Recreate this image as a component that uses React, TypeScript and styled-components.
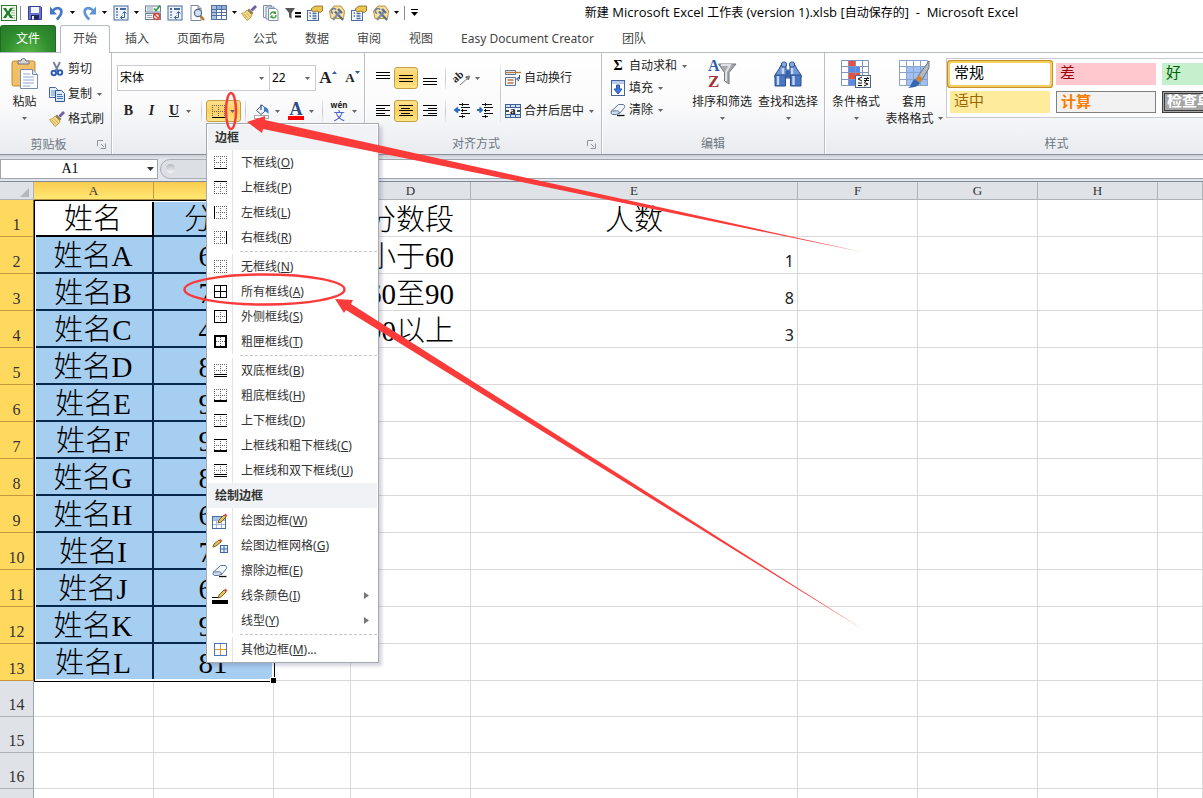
import React from "react";
import styled, { createGlobalStyle, css } from "styled-components";

const UI = `"Noto Sans", "Noto Sans CJK SC", sans-serif`;
const SONG = `"Liberation Serif", "Noto Sans CJK SC", serif`;

const GlobalStyle = createGlobalStyle`
  * { box-sizing: border-box; }
  html, body, #root { height: 100%; }
  body { margin: 0; background: #fff; color: #1e1e1e; font: 12px/16px ${UI}; overflow: hidden; }
  button, input, select { font: inherit; color: inherit; margin: 0; padding: 0; border: 0; background: none; border-radius: 0; }
  button { white-space: nowrap; cursor: pointer; }
  svg { display: block; flex: none; overflow: visible; }
`;

const Window = styled.div`
  position: relative;
  display: flex;
  flex-direction: column;
  height: 100%;
  overflow: hidden;
`;

/* ---------- title bar ---------- */

const TitleBar = styled.header`
  display: flex;
  align-items: center;
  height: 25px;
  flex: none;
`;
const QuickAccess = styled.nav`
  display: flex;
  align-items: center;
  height: 24px;
  padding-left: 1px;
  flex: none;
`;
const QuickButton = styled.button<{ $w?: number }>`
  display: flex;
  align-items: center;
  gap: 5px;
  width: ${(p) => p.$w ?? 22}px;
  height: 20px;
`;
const QuickDivider = styled.span`
  width: 1px;
  height: 14px;
  margin: 0 6px 0 3px;
  background: #8c8c8c;
`;
const Title = styled.h1`
  flex: 1;
  margin: 0;
  padding-right: 18px;
  text-align: center;
  font-size: 12px;
  font-weight: 400;
  white-space: pre;
  color: #000;
`;
const TitleLatin = styled.span`
  font-family: "Open Sans", sans-serif;
  font-size: 13px;
`;

/* ---------- tabs ---------- */

const TabStrip = styled.nav`
  display: flex;
  align-items: flex-end;
  height: 28px;
  flex: none;
  border-bottom: 1px solid #b6bac1;
`;
const FileTab = styled.button`
  width: 56px;
  height: 27px;
  margin-right: 3px;
  border: 1px solid #1d6b1f;
  border-bottom: 0;
  border-radius: 3px 3px 0 0;
  background: radial-gradient(ellipse at 50% 110%, #5cb84a 0%, #2f8d2d 60%, #26792a 100%);
  color: #fff;
`;
const Tab = styled.button<{ $active?: boolean }>`
  height: 27px;
  padding: 0 14px;
  color: #444;
  ${(p) =>
    p.$active &&
    css`
      height: 28px;
      margin: 0 1px -1px;
      padding: 0 12px 1px;
      border: 1px solid #b6bac1;
      border-bottom: 0;
      border-radius: 3px 3px 0 0;
      background: #fff;
    `}
`;

/* ---------- ribbon ---------- */

const Ribbon = styled.section`
  display: flex;
  height: 102px;
  flex: none;
  background: linear-gradient(#fff 0, #fbfbfc 50%, #e8ebef 100%);
  border-bottom: 1px solid #8b9097;
`;
const Group = styled.div<{ $w: number }>`
  display: flex;
  flex-direction: column;
  flex: none;
  width: ${(p) => p.$w}px;
  border-right: 1px solid #bcc0c6;
  box-shadow: 1px 0 0 #fff;
`;
const GroupBody = styled.div<{ $pad?: string }>`
  display: flex;
  flex: 1;
  padding: ${(p) => p.$pad ?? "0"};
`;
const GroupLabel = styled.div`
  display: flex;
  align-items: center;
  justify-content: center;
  height: 20px;
  color: #6d7682;
  span { flex: 1; text-align: center; }
  svg { width: 9px; margin-right: 5px; }
`;
const Stack = styled.div<{ $gap?: number }>`
  display: flex;
  flex: none;
  flex-direction: column;
  gap: ${(p) => p.$gap ?? 0}px;
`;
const Row = styled.div`
  display: flex;
  align-items: center;
  height: 26px;
`;
const Divider = styled.span<{ $tall?: boolean }>`
  flex: none;
  width: 1px;
  height: ${(p) => (p.$tall ? 58 : 22)}px;
  margin: 0 4px;
  background: linear-gradient(#e8eaed, #c4c7cc, #e8eaed);
`;
const BigButton = styled.button<{ $w: number }>`
  display: flex;
  flex: none;
  flex-direction: column;
  align-items: center;
  width: ${(p) => p.$w}px;
  height: 76px;
  padding-top: 4px;
`;
const BigIcon = styled.span`
  display: flex;
  align-items: center;
  justify-content: center;
  height: 34px;
  margin-bottom: 2px;
`;
const BigLine = styled.span`
  display: flex;
  align-items: center;
  justify-content: center;
  gap: 4px;
  height: 17px;
`;
const SmallButton = styled.button<{ $h?: number }>`
  display: flex;
  align-items: center;
  gap: 3px;
  height: ${(p) => p.$h ?? 22}px;
  > span + svg { margin-left: 2px; }
`;
const ToolButton = styled.button<{ $w?: number; $gap?: number; $on?: boolean }>`
  display: flex;
  flex: none;
  align-items: center;
  justify-content: center;
  gap: ${(p) => p.$gap ?? 5}px;
  width: ${(p) => p.$w ?? 23}px;
  height: 22px;
  ${(p) =>
    p.$on &&
    css`
      border: 1px solid #c2a04a;
      border-radius: 3px;
      background: linear-gradient(#fde08c, #fdd063 50%, #ffe585);
    `}
`;
const Glyph = styled.span<{ $size?: number; $style?: string }>`
  font: ${(p) => p.$style ?? "bold"} ${(p) => p.$size ?? 14}px/18px "Liberation Serif", serif;
  color: #222;
`;
const Underlined = styled(Glyph)`
  text-decoration: underline;
`;
const ColorGlyph = styled(Glyph)`
  width: 16px;
  height: 18px;
  line-height: 15px;
  border-bottom: 4px solid #f00;
  color: #2b4a86;
`;
const Pinyin = styled.span`
  display: flex;
  flex-direction: column;
  align-items: center;
  width: 16px;
  font: bold 8px/9px ${UI};
  color: #222;
  span { font-size: 11px; line-height: 13px; font-weight: 400; color: #2747c0; }
`;
const Sigma = styled.span`
  width: 16px;
  text-align: center;
  font: bold 14px/16px "Liberation Serif", serif;
  color: #000;
`;
const Combo = styled.label<{ $w: number }>`
  display: flex;
  flex: none;
  align-items: center;
  width: ${(p) => p.$w}px;
  height: 26px;
  margin-right: -1px;
  padding-right: 5px;
  border: 1px solid #c9ccd1;
  background: #fff;
  select {
    flex: 1;
    min-width: 0;
    height: 22px;
    padding-left: 2px;
    appearance: none;
    outline: 0;
    color: #000;
  }
`;
const MenuAnchor = styled.div`
  position: relative;
  display: flex;
`;

/* ---------- cell styles gallery ---------- */

const Gallery = styled.div`
  display: grid;
  grid-template-columns: repeat(4, 100px);
  grid-auto-rows: 22px;
  gap: 6px 6px;
  height: 60px;
  margin: 5px 0 0 3px;
  padding: 4px 3px;
  border: 1px solid #c6cad0;
  background: #fff;
`;
const StyleCell = styled.button<{ $bg: string; $fg: string; $kind?: "on" | "box" | "dark" }>`
  padding: 0 0 4px 4px;
  text-align: left;
  font-size: 15px;
  line-height: 18px;
  overflow: hidden;
  background: ${(p) => p.$bg};
  color: ${(p) => p.$fg};
  ${(p) =>
    p.$kind === "on" &&
    css`
      outline: 2px solid #f5cf5e;
      box-shadow: 0 0 0 3px #c98f2e;
      border-radius: 1px;
    `}
  ${(p) =>
    p.$kind === "box" &&
    css`
      border: 1px solid #7f7f7f;
      font-weight: 700;
    `}
  ${(p) =>
    p.$kind === "dark" &&
    css`
      border: 3px double #3f3f3f;
      padding-left: 2px;
      line-height: 12px;
      font-weight: 700;
    `}
`;

/* ---------- borders menu ---------- */

const Menu = styled.div`
  position: absolute;
  z-index: 5;
  top: 23px;
  left: 0;
  width: 173px;
  padding: 1px 1px 0;
  border: 1px solid #a7abb0;
  background: #fff;
  box-shadow: 3px 3px 3px rgba(90, 90, 130, 0.25);
`;
const MenuHeading = styled.div`
  height: 25px;
  padding-left: 7px;
  background: #f0f2f5;
  font-weight: 700;
  line-height: 25px;
  color: #333;
`;
const MenuItem = styled.button`
  display: flex;
  align-items: center;
  width: 100%;
  height: 25px;
  padding-right: 8px;
  text-align: left;
  color: #333;
`;
const MenuIcon = styled.span`
  display: flex;
  align-items: center;
  justify-content: center;
  width: 25px;
  height: 25px;
  margin-right: 8px;
  border-right: 1px solid #e2e4e7;
`;
const MenuText = styled.span`
  flex: 1;
`;
const MenuRule = styled.div`
  height: 4px;
  padding: 1px 0 0 32px;
  &::before { content: ""; display: block; border-top: 1px dashed #c6c6c6; }
`;

/* ---------- formula bar ---------- */

const FormulaBar = styled.div`
  display: flex;
  flex: none;
  height: 27px;
  padding-top: 4px;
  background: linear-gradient(#c9ccd2 0, #e3e6ea 4px, #e3e6ea 24px, #dfe4ee 24px);
  border-bottom: 1px solid #868b93;
`;
const NameBox = styled.label`
  display: flex;
  align-items: center;
  width: 158px;
  height: 20px;
  padding-right: 3px;
  border: 1px solid #a0a5ad;
  background: #fff;
  input {
    flex: 1;
    min-width: 0;
    padding-right: 8px;
    text-align: center;
    font: 14px/16px "Liberation Serif", serif;
    outline: 0;
    color: #000;
  }
`;
const FunctionArea = styled.div`
  width: 84px;
  height: 20px;
  margin-left: 2px;
  padding: 4px 5px;
  border: 1px solid #a9aeb6;
  border-radius: 10px 0 0 10px;
  background: #dcdfe4;
  &::before {
    content: "";
    display: block;
    width: 9px;
    height: 9px;
    border-radius: 50%;
    background: linear-gradient(#b4b8be, #f6f7f8);
  }
`;
const FormulaInput = styled.input`
  && {
    flex: 1;
    height: 20px;
    border: solid #a0a5ad;
    border-width: 1px 0;
    background: #fff;
    outline: 0;
  }
`;

/* ---------- sheet ---------- */

const Sheet = styled.main`
  position: relative;
  flex: 1;
  min-height: 0;
  overflow: hidden;
`;
const Grid = styled.table`
  width: 100%;
  table-layout: fixed;
  border-collapse: separate;
  border-spacing: 0;
`;
const ColHead = styled.th<{ $sel?: boolean }>`
  height: 18px;
  padding: 0;
  border-right: 1px solid ${(p) => (p.$sel ? "#c8963c" : "#aeb3b8")};
  border-bottom: 1px solid ${(p) => (p.$sel ? "#b08a3c" : "#aeb3b8")};
  background: ${(p) => (p.$sel ? "linear-gradient(#fbcb50, #ffe873)" : "#dfe2e6")};
  font: 13px/17px ${SONG};
  color: #333;
`;
const Corner = styled(ColHead)`
  svg { margin: 3px 4px 0 auto; }
`;
const RowHead = styled.th<{ $sel?: boolean }>`
  padding: 0;
  border-right: 1px solid ${(p) => (p.$sel ? "#7c6a35" : "#9fa5ab")};
  border-bottom: 1px solid ${(p) => (p.$sel ? "#c8963c" : "#aeb3b8")};
  background: ${(p) => (p.$sel ? "#ffd95e" : "#dfe2e6")};
  vertical-align: bottom;
  text-align: center;
  font: 16px/22px ${SONG};
  color: #333;
`;
const BodyRow = styled.tr<{ $short?: boolean }>`
  height: ${(p) => (p.$short ? 36 : 37)}px;
`;
const Cell = styled.td<{ $sel?: boolean; $head?: boolean; $num?: boolean }>`
  padding: 3px 0 0;
  border-right: 1px solid #d9d9d9;
  border-bottom: 1px solid #d9d9d9;
  overflow: hidden;
  white-space: nowrap;
  text-align: center;
  font: 300 29px/32px ${SONG};
  color: #000;
  ${(p) =>
    p.$sel &&
    css`
      border-right: 2px solid #06284a;
      border-bottom: 2px solid #06284a;
      background: #a6cef0;
    `}
  ${(p) =>
    p.$head &&
    css`
      border-color: #000;
      background: #fff;
    `}
  ${(p) =>
    p.$num &&
    css`
      padding: 12px 3px 0 0;
      text-align: right;
      font: 16px/24px ${UI};
      color: #222;
    `}
`;
const SelectionFrame = styled.div`
  position: absolute;
  top: 18px;
  left: 34px;
  width: 241px;
  height: 482px;
  border: 1px solid #000;
  box-shadow: inset 0 -2px #fff, inset -2px 0 #fff, inset 1px 1px #fff;
  pointer-events: none;
  &::after {
    content: "";
    position: absolute;
    right: -2px;
    bottom: -2px;
    width: 5px;
    height: 5px;
    border: 1px solid #fff;
    border-width: 1px 0 0 1px;
    background: #000;
  }
`;
const Annotations = styled.svg`
  position: absolute;
  z-index: 9;
  top: 0;
  left: 0;
  pointer-events: none;
`;

/* ---------- icons ---------- */

const Down = ({ c = "#666", w = 5 }: { c?: string; w?: number }) => (
  <svg width={w} height={w === 5 ? 3 : 4} viewBox={`0 0 ${w} ${w === 5 ? 3 : 4}`}>
    <path d={w === 5 ? "M0 0h5L2.500 3z" : "M0 0h7L3.500 4z"} fill={c} />
  </svg>
);

const I16 = ({ children }: { children: React.ReactNode }) => (
  <svg width="16" height="16" viewBox="0 0 16 16" fill="none">
    {children}
  </svg>
);

const ExcelIcon = () => (
  <I16>
    <rect x=".5" y=".5" width="15" height="15" fill="#f2f8ef" stroke="#2f7a35" />
    <path d="M10 3h4M10 5.500h4M10 8h4M10 10.500h4M10 13h4" stroke="#8cc084" />
    <path d="M2 3h3l2 3.400L9 3h3L8.600 8 12 13H9L7 9.800 5 13H2l3.400-5z" fill="#217a2b" />
  </I16>
);
const SaveIcon = () => (
  <I16>
    <path d="M1.500 1.500h12l1 1v12h-13z" fill="#6a74cf" stroke="#3a3f95" />
    <rect x="4" y="2" width="8" height="6" fill="#f4f6ff" />
    <rect x="4" y="10" width="8" height="4.500" fill="#24285e" />
    <rect x="5" y="11" width="2" height="3.500" fill="#e8ebff" />
  </I16>
);
const UndoIcon = () => (
  <I16>
    <path d="M4 5.500C7.500 1.500 13 3 12.300 7.500c-.3 2.500-2 4.500-4.500 7" stroke="#4678c8" strokeWidth="2.600" />
    <path d="M1 1.500v8h7z" fill="#4678c8" />
  </I16>
);
const RedoIcon = () => (
  <I16>
    <path d="M12 5.500C8.500 1.500 3 3 3.700 7.500c.3 2.500 2 4.500 4.500 7" stroke="#5f93d8" strokeWidth="2.600" />
    <path d="M15 1.500v8H8z" fill="#5f93d8" />
  </I16>
);
const PivotIcon = () => (
  <I16>
    <rect x="1" y="1" width="14" height="14" fill="#eef3fa" stroke="#466a9c" />
    <path d="M3 4h2M7 4h6" stroke="#466a9c" strokeWidth="2" />
    <path d="M4 6v7" stroke="#7e9cc4" strokeWidth="2" strokeDasharray="2 1" />
    <path d="M7.500 12.500h4V7M9.500 8.500l2-2 2 2M9.500 10.500l-2 2 2 2" stroke="#3c5f92" />
  </I16>
);
const ListIcon = () => (
  <I16>
    <rect x=".5" y="1" width="15" height="6" fill="#f3f6fa" stroke="#6c7f99" />
    <rect x=".5" y="8.500" width="15" height="6" fill="#f3f6fa" stroke="#6c7f99" />
    <path d="M2 3h6M2 5h6M2 10.500h5M2 12.500h5" stroke="#9aa9bd" />
    <path d="M9 3.500l2 2 4-5" stroke="#2c9a3a" strokeWidth="1.600" />
    <circle cx="11.500" cy="11.500" r="3" fill="#fff" stroke="#d33b30" strokeWidth="1.300" />
    <path d="M9.500 9.500l4 4" stroke="#d33b30" strokeWidth="1.300" />
  </I16>
);
const PreviewIcon = () => (
  <I16>
    <path d="M2 .5h7l3 3v12H2z" fill="#fff" stroke="#7788a0" />
    <path d="M9 .5v3h3" stroke="#7788a0" />
    <circle cx="9" cy="8" r="3.600" fill="#cfe2f6" stroke="#566a85" strokeWidth="1.200" />
    <path d="M11.500 11l3.500 4" stroke="#b3742c" strokeWidth="2.400" />
  </I16>
);
const TableIcon = () => (
  <I16>
    <rect x=".5" y=".5" width="15" height="14" fill="#fff" stroke="#50709b" />
    <rect x="1" y="1" width="14" height="3" fill="#8fb0dc" />
    <rect x="1" y="1" width="4" height="13" fill="#a9c3e6" />
    <path d="M1 4.500h14M1 7.500h14M1 10.500h14M5.500 1v13M10.500 1v13" stroke="#50709b" />
  </I16>
);
const BrushIcon = () => (
  <I16>
    <path d="M10.500 5.500L15 1" stroke="#6c5fa6" strokeWidth="2.800" />
    <path d="M8 3.500l4.500 4.500-2 2L6 5.500z" fill="#8a8064" />
    <path d="M6 5l5 5c-1 2.500-2.500 4-5 5.500L.5 8.500C3 8 4.500 7 6 5z" fill="#f3da85" stroke="#b08f3a" strokeWidth=".8" />
    <path d="M3 9l4 4.500M5 7.500l4 4.500" stroke="#c4a149" strokeWidth=".8" />
  </I16>
);
const CopyRefreshIcon = () => (
  <I16>
    <path d="M.5.500h8v12h-8z" fill="#eef3fa" stroke="#7c90ac" />
    <path d="M3 2h8v12H3z" fill="#eef3fa" stroke="#7c90ac" />
    <path d="M5.500 3.500h7l2.500 2v10H5.500z" fill="#fff" stroke="#7c90ac" />
    <path d="M7.500 9.500a2.500 2.500 0 014.500-1.500M13 10a2.500 2.500 0 01-4.500 1.800" stroke="#3c9c2c" strokeWidth="1.400" />
    <path d="M13 6v3h-3zM7.500 13.500v-3h3z" fill="#3c9c2c" />
  </I16>
);
const FilterEqIcon = () => (
  <I16>
    <path d="M0 3h10L6.500 8v6L4 12V8z" fill="#555" />
    <path d="M10 8h6M10 11.500h6" stroke="#000" strokeWidth="2" />
  </I16>
);
const PropsIcon = () => (
  <I16>
    <rect x=".5" y="5.500" width="11" height="10" fill="#f5f8fc" stroke="#4a6da3" />
    <path d="M2.500 8h1.500M2.500 11h1.500M5.500 8.500h4M5.500 11h4M5.500 13.500h4" stroke="#4a6da3" strokeWidth="1.400" />
    <path d="M4 4l4-3h7.500v5l-2.500 1.500L10 6l-4 1z" fill="#ecc552" stroke="#94732a" strokeWidth=".9" />
  </I16>
);
const ToolsIcon = () => (
  <I16>
    <path d="M.5 6L5 1h7l3.500 5-1 7.500H2z" fill="#f8e0a0" stroke="#c0903a" />
    <path d="M6 6.500l8 8.500" stroke="#59708f" strokeWidth="2.200" />
    <path d="M11.500 6L4 15" stroke="#7c8fac" strokeWidth="2.200" />
    <path d="M7 4.500A2.600 2.600 0 104 8.500" stroke="#6d83a3" strokeWidth="1.600" />
    <path d="M9 4l4 4" stroke="#59708f" strokeWidth="2.400" />
  </I16>
);
const PasteIcon = () => (
  <svg width="28" height="32" viewBox="0 0 28 32" fill="none">
    <rect x="1" y="3" width="23" height="25" rx="2" fill="#f0bf67" stroke="#c08b35" />
    <path d="M7 6V3h3a2.500 2.500 0 015 0h3v3z" fill="#d5d8dd" stroke="#70757d" />
    <path d="M9.500 11.500h12l5 5v14h-17z" fill="#fff" stroke="#7a8ba6" />
    <path d="M21.500 11.500v5h5" fill="#dfe7f3" stroke="#7a8ba6" />
    <path d="M12 16h7M12 19h11M12 22h11M12 25h11M12 28h7" stroke="#8fa8cc" />
  </svg>
);
const CutIcon = () => (
  <I16>
    <path d="M4.500 1l4.500 9M11 1L6.500 10" stroke="#6c7f9c" strokeWidth="1.800" />
    <circle cx="4.800" cy="12" r="2.200" stroke="#2f5fb4" strokeWidth="2" />
    <circle cx="11" cy="11.500" r="2.200" stroke="#2f5fb4" strokeWidth="2" />
  </I16>
);
const CopyIcon = () => (
  <I16>
    <path d="M.5 1.500h6l2 2v8h-8z" fill="#eaf1fb" stroke="#3f66a8" />
    <path d="M2 5h4M2 7h4M2 9h4" stroke="#6e92cc" />
    <path d="M6.500 4.500h6l3 3v8h-9z" fill="#dce9fa" stroke="#2f5597" />
    <path d="M8 8.500h5M8 10.500h6M8 12.500h6" stroke="#3f74c4" />
  </I16>
);
const FillIcon = () => (
  <I16>
    <path d="M8 2L2.500 7.500l4.500 4 6-5z" fill="#eef3fa" stroke="#415f8f" />
    <path d="M7 7V1.500" stroke="#415f8f" strokeWidth="1.300" />
    <path d="M10 4c3 0 5 2 4.500 7-1.500-1-2-3-4.500-3z" fill="#3e7cc9" />
    <rect x=".5" y="12.500" width="14" height="3" fill="#fff" stroke="#aaa" />
  </I16>
);
const OrientIcon = () => (
  <I16>
    <text x="-2" y="10" fontSize="11" fontFamily="Liberation Serif" fontWeight="700" fill="#222" transform="rotate(-42 4 7)">ab</text>
    <path d="M6 15l8-7M15.500 6l-4 1 3 3z" stroke="#777" fill="#777" />
  </I16>
);
const IndentIcon = ({ right }: { right?: boolean }) => (
  <I16>
    <path d="M5 1.500h10M7 4.500h9M7 7.500h6M7 10.500h9M5 13.500h6" stroke="#111" shapeRendering="crispEdges" />
    <path d="M8.500 0v15" stroke="#111" strokeDasharray="1 1" shapeRendering="crispEdges" />
    <path d={right ? "M0 7h4M2.500 4.500L5 7 2.500 9.500" : "M6 7H2M4 4.500L1 7l3 2.500"} stroke="#2a6ac4" strokeWidth="1.800" />
  </I16>
);
const WrapIcon = () => (
  <I16>
    <path d="M.5.500h10v4H.5zM.5 7.500h10v8H.5z" fill="#f4f7fb" stroke="#5d7294" />
    <path d="M0 2.500h16" stroke="#b97a3c" strokeWidth="1.400" />
    <path d="M2.500 10h6M2.500 13h6" stroke="#b97a3c" strokeWidth="1.400" />
    <path d="M14.500 5v4h-2M14 7l-2.500 2L14 11" stroke="#2f5597" />
  </I16>
);
const MergeIcon = () => (
  <I16>
    <rect x=".5" y="1.500" width="15" height="13" fill="#cfe0f5" stroke="#3f5f94" />
    <path d="M1 4.500h14M1 11.500h14M5.500 1v3M10.500 1v3M5.500 12v3M10.500 12v3" stroke="#3f5f94" />
    <rect x="1" y="5" width="14" height="6" fill="#f5f8fd" />
    <path d="M1 8h3M15 8h-3" stroke="#111" strokeWidth="1.600" />
    <text x="5" y="11" fontSize="11" fontWeight="700" fontFamily="Liberation Serif" fill="#111">a</text>
  </I16>
);
const FillDownIcon = () => (
  <I16>
    <rect x="1.500" y=".5" width="13" height="15" fill="#fff" stroke="#44659c" />
    <rect x="2" y="1" width="12" height="3" fill="#b9cdea" />
    <path d="M6.500 5h3v4H12l-4 5-4-5h2.500z" fill="#3e78e0" stroke="#2a55a8" />
  </I16>
);
const EraserIcon = () => (
  <I16>
    <path d="M8.500 2.500h4.500c2 .5 2 2 1.500 3l-5 6H5.500l-4-2.500z" fill="#f4f7fc" stroke="#5d7399" />
    <path d="M1.500 9c-1 1.500-.5 3 1 3.500h4l3-1.500c0-1.500-1.500-2.500-3-2.200z" fill="#cfdcf0" stroke="#5d7399" />
    <path d="M7 13.500h7.500" stroke="#111" strokeWidth="1.300" />
  </I16>
);
const SortIcon = () => (
  <svg width="30" height="30" viewBox="0 0 30 30" fill="none">
    <path d="M11.500 5h17.500l-7 8.500V25l-4.500-3v-8.500z" fill="#a6a9ad" stroke="#74777c" />
    <path d="M14 6h9l-4 7v9" stroke="#dfe1e4" strokeWidth="2" />
    <text x="1" y="12" fontSize="16" fontWeight="700" fontFamily="Liberation Serif" fill="#2f5ba8">A</text>
    <text x="1" y="28" fontSize="17" fontWeight="700" fontFamily="Liberation Serif" fill="#a03434">Z</text>
  </svg>
);
const FindIcon = () => (
  <svg width="28" height="26" viewBox="0 0 28 26" fill="none">
    <path d="M7 4h5v5h4V4h5l2 4 4 6v3H1v-3l4-6z" fill="#6f97d6" stroke="#2e4f8d" />
    <rect x="7.500" y="1" width="5" height="5" rx="2" fill="#86a9de" stroke="#2e4f8d" />
    <rect x="15.500" y="1" width="5" height="5" rx="2" fill="#86a9de" stroke="#2e4f8d" />
    <path d="M1 14h10.500v11H1zM16.500 14H27v11H16.500z" fill="#4776c4" stroke="#2e4f8d" />
    <path d="M4 15v9M19.500 15v9M9 7v6M18 7v6" stroke="#c6d8f3" strokeWidth="2.400" />
    <path d="M11.500 10h5v6h-5z" fill="#3a62a8" />
  </svg>
);
const CondIcon = () => (
  <svg width="31" height="29" viewBox="0 0 31 29" fill="none">
    <path d="M.5.500h27v25H.5z" fill="#fff" />
    <path d="M7 1h7v5H7zM7 13h12v6H7z" fill="#ef4e3e" />
    <path d="M7 7h12v6H7zM7 19h7v6H7z" fill="#5a8ae8" />
    <path d="M.5.500h27v25H.5zM0 6.500h28M0 12.500h28M0 19.500h28M7.500 0v26M14.500 0v26M21.500 0v26" stroke="#7f97c0" />
    <rect x="14.500" y="15.500" width="15" height="12" fill="#f6f8fa" stroke="#4d6583" />
    <path d="M21 17l-4 2 4 2M17 23h4M17 25.500h4M23 18.500h5M23 20.500h5M27 17l-3 5M23 22.500l4 1.500-4 2" stroke="#111" />
  </svg>
);
const TableStyleIcon = () => (
  <svg width="31" height="29" viewBox="0 0 31 29" fill="none">
    <path d="M.5.500h28v25H.5z" fill="#fff" />
    <path d="M7 7h22v19H7z" fill="#9fc0f2" />
    <path d="M.5.500h28v25H.5zM0 6.500h28M0 12.500h28M0 19.500h28M7.500 0v26M14.500 0v26M21.500 0v26" stroke="#8ba3cc" />
    <path d="M30 1L19 16l4 4 7-12z" fill="#b4b9c0" stroke="#6e747c" />
    <path d="M20 15l4 4-3 4-5-4z" fill="#c98743" />
    <path d="M16 19l5 4c-3 5-7 4-12 5 4-2 3-7 7-9z" fill="#3566b4" />
  </svg>
);
const Launcher = () => (
  <svg width="9" height="9" viewBox="0 0 9 9" fill="none">
    <path d="M.5 6V.5H6" stroke="#8d939c" />
    <path d="M4 4l3 3M8.500 3.500v5h-5" stroke="#8d939c" />
  </svg>
);

type Lines = [number, number, number][];
const LinesIcon = ({ lines }: { lines: Lines }) => (
  <svg width="14" height="18" viewBox="0 0 14 18" shapeRendering="crispEdges">
    {lines.map(([x, y, w], i) => (
      <rect key={i} x={x} y={y} width={w} height="1" fill="#000" />
    ))}
  </svg>
);
const full = (ys: number[]): Lines => ys.map((y) => [0, y, 14]);
const para = (side: "left" | "center" | "right"): Lines =>
  [3, 6, 8, 11, 13].map((y, i) => {
    const w = i % 2 ? 9 : 14;
    const x = side === "left" ? 0 : side === "center" ? Math.floor((14 - w) / 2) : 14 - w;
    return [x, y, w];
  });

/* Edge weights: 0 dotted, 1 thin, 2 thick, 3 double */
type Edges = { t?: number; b?: number; l?: number; r?: number; inner?: boolean };
const EdgeIcon = ({ t = 0, b = 0, l = 0, r = 0, inner }: Edges) => (
  <svg width="13" height="13" viewBox="0 0 13 13" shapeRendering="crispEdges" fill="none">
    <g stroke="#666" strokeDasharray={inner ? undefined : "1 1"}>
      <path d="M0 6.500h13M6.500 0v13" stroke={inner ? "#000" : "#666"} />
      {!t && <path d="M0 .5h13" />}
      {!b && <path d="M0 12.500h13" />}
      {!l && <path d="M.5 0v13" />}
      {!r && <path d="M12.500 0v13" />}
    </g>
    {t > 0 && <rect width="13" height={t === 2 ? 2 : 1} fill="#000" />}
    {b === 1 && <rect y="12" width="13" height="1" fill="#000" />}
    {b === 2 && <rect y="11" width="13" height="2" fill="#000" />}
    {b === 3 && <path d="M0 10.500h13M0 12.500h13" stroke="#000" />}
    {l > 0 && <rect width={l === 2 ? 2 : 1} height="13" fill="#000" />}
    {r > 0 && <rect x={r === 2 ? 11 : 12} width={r} height="13" fill="#000" />}
  </svg>
);
const Pencil = () => (
  <g>
    <path d="M6 10l1-3 5-5 2 2-5 5z" fill="#e9c45c" stroke="#7d6022" />
    <path d="M12 2l1.500-1.500 2 2L14 4z" fill="#d0544a" />
  </g>
);
const DrawBorderIcon = () => (
  <I16>
    <rect x=".5" y="3.500" width="13" height="12" fill="#fff" stroke="#4a6da3" />
    <path d="M1 4h12v3H1z" fill="#a9c4ea" />
    <path d="M1 7.500h12M1 11.500h12M4.500 4v11M9.500 4v11" stroke="#a3badf" />
    <Pencil />
  </I16>
);
const DrawGridIcon = () => (
  <I16>
    <path d="M1 9l1-3 5-4 2 2-5 4z" fill="#e9c45c" stroke="#7d6022" />
    <path d="M7 2l1.500-1 2 2L9 4z" fill="#d0544a" />
    <rect x="8.500" y="7.500" width="7" height="7" fill="#e8f0fc" stroke="#3f64a8" />
    <path d="M12 8v6M9 11h6" stroke="#3f64a8" />
  </I16>
);
const LineColorIcon = () => (
  <I16>
    <path d="M0 9.500h6" stroke="#000" />
    <Pencil />
    <rect y="12" width="16" height="4" fill="#000" />
  </I16>
);
const MoreBordersIcon = () => (
  <svg width="13" height="13" viewBox="0 0 13 13" fill="none">
    <rect x=".5" y=".5" width="12" height="12" fill="#fff" stroke="#4f73c4" />
    <path d="M1 6.500h11M6.500 1v11" stroke="#d79a1e" />
  </svg>
);

/* ---------- data ---------- */

const TABS = ["插入", "页面布局", "公式", "数据", "审阅", "视图", "Easy Document Creator", "团队"];

type Entry = { text: string; k: string; icon?: React.ReactNode; sub?: boolean; tail?: string } | "rule";
const BORDER_ENTRIES: Entry[] = [
  { text: "下框线", k: "O", icon: <EdgeIcon b={1} /> },
  { text: "上框线", k: "P", icon: <EdgeIcon t={1} /> },
  { text: "左框线", k: "L", icon: <EdgeIcon l={1} /> },
  { text: "右框线", k: "R", icon: <EdgeIcon r={1} /> },
  "rule",
  { text: "无框线", k: "N", icon: <EdgeIcon /> },
  { text: "所有框线", k: "A", icon: <EdgeIcon t={1} b={1} l={1} r={1} inner /> },
  { text: "外侧框线", k: "S", icon: <EdgeIcon t={1} b={1} l={1} r={1} /> },
  { text: "粗匣框线", k: "T", icon: <EdgeIcon t={2} b={2} l={2} r={2} /> },
  "rule",
  { text: "双底框线", k: "B", icon: <EdgeIcon b={3} /> },
  { text: "粗底框线", k: "H", icon: <EdgeIcon b={2} /> },
  { text: "上下框线", k: "D", icon: <EdgeIcon t={1} b={1} /> },
  { text: "上框线和粗下框线", k: "C", icon: <EdgeIcon t={1} b={2} /> },
  { text: "上框线和双下框线", k: "U", icon: <EdgeIcon t={1} b={3} /> },
];
const DRAW_ENTRIES: Entry[] = [
  { text: "绘图边框", k: "W", icon: <DrawBorderIcon /> },
  { text: "绘图边框网格", k: "G", icon: <DrawGridIcon /> },
  { text: "擦除边框", k: "E", icon: <EraserIcon /> },
  { text: "线条颜色", k: "I", icon: <LineColorIcon />, sub: true },
  { text: "线型", k: "Y", sub: true },
  "rule",
  { text: "其他边框", k: "M", icon: <MoreBordersIcon />, tail: "..." },
];

const SCORES = [65, 72, 45, 80, 90, 92, 85, 66, 73, 68, 91, 81];
const BANDS: [string, number][] = [["小于60", 1], ["60至90", 8], ["90以上", 3]];
const ROWS = Array.from({ length: 17 }, (_, i) => {
  if (i === 0) return ["姓名", "分数", "", "分数段", "人数"];
  const band = BANDS[i - 1];
  return i <= 12
    ? ["姓名" + "ABCDEFGHIJKL"[i - 1], String(SCORES[i - 1]), "", band ? band[0] : "", band ? String(band[1]) : ""]
    : ["", "", "", "", ""];
});
const COLS: [string, number | undefined][] = [
  ["A", 120], ["B", 120], ["C", 77], ["D", 120], ["E", 327], ["F", 120], ["G", 120], ["H", 120], ["", undefined],
];

const Entries = ({ list }: { list: Entry[] }) => (
  <>
    {list.map((e, i) =>
      e === "rule" ? (
        <MenuRule key={i} />
      ) : (
        <MenuItem key={i} role="menuitem">
          <MenuIcon>{e.icon}</MenuIcon>
          <MenuText>
            {e.text}(<u>{e.k}</u>){e.tail}
          </MenuText>
          {e.sub && (
            <svg width="5" height="7" viewBox="0 0 5 7"><path d="M0 0l5 3.500L0 7z" fill="#777" /></svg>
          )}
        </MenuItem>
      )
    )}
  </>
);

export default function App() {
  return (
    <Window>
      <GlobalStyle />
      <TitleBar>
        <QuickAccess aria-label="快速访问工具栏">
          <ExcelIcon />
          <QuickDivider />
          <QuickButton aria-label="保存"><SaveIcon /></QuickButton>
          <QuickButton $w={32} aria-label="撤消"><UndoIcon /><Down c="#000" /></QuickButton>
          <QuickButton $w={32} aria-label="恢复"><RedoIcon /><Down c="#000" /></QuickButton>
          <QuickButton $w={32} aria-label="透视表"><PivotIcon /><Down c="#000" /></QuickButton>
          <QuickButton aria-label="数据有效性"><ListIcon /></QuickButton>
          <QuickButton aria-label="透视图"><PivotIcon /></QuickButton>
          <QuickButton aria-label="打印预览"><PreviewIcon /></QuickButton>
          <QuickButton $w={30} aria-label="表格"><TableIcon /><Down c="#000" /></QuickButton>
          <QuickButton aria-label="格式刷"><BrushIcon /></QuickButton>
          <QuickButton aria-label="刷新"><CopyRefreshIcon /></QuickButton>
          <QuickButton aria-label="筛选"><FilterEqIcon /></QuickButton>
          <QuickButton aria-label="属性"><PropsIcon /></QuickButton>
          <QuickButton aria-label="工具"><ToolsIcon /></QuickButton>
          <QuickButton aria-label="控件属性"><PropsIcon /></QuickButton>
          <QuickButton $w={28} aria-label="控件工具"><ToolsIcon /><Down c="#000" /></QuickButton>
          <QuickDivider />
          <button aria-label="自定义快速访问工具栏">
            <svg width="7" height="7" viewBox="0 0 7 7"><path d="M0 0h7v1H0zM0 3h7L3.500 7z" fill="#000" /></svg>
          </button>
        </QuickAccess>
        <Title>
          新建<TitleLatin> Microsoft Excel </TitleLatin>工作表<TitleLatin> (version 1).xlsb [</TitleLatin>自动保存的<TitleLatin>]  -  Microsoft Excel</TitleLatin>
        </Title>
      </TitleBar>

      <TabStrip>
        <FileTab>文件</FileTab>
        <Tab $active>开始</Tab>
        {TABS.map((t) => <Tab key={t}>{t}</Tab>)}
      </TabStrip>

      <Ribbon>
        <Group $w={112}>
          <GroupBody>
            <BigButton $w={49}>
              <BigIcon><PasteIcon /></BigIcon>
              <BigLine>粘贴</BigLine>
              <BigLine><Down /></BigLine>
            </BigButton>
            <Stack>
              <SmallButton $h={32}><CutIcon /><span>剪切</span></SmallButton>
              <SmallButton $h={18}><CopyIcon /><span>复制</span><Down /></SmallButton>
              <SmallButton $h={32}><BrushIcon /><span>格式刷</span></SmallButton>
            </Stack>
          </GroupBody>
          <GroupLabel><span>剪贴板</span><Launcher /></GroupLabel>
        </Group>

        <Group $w={253}>
          <GroupBody $pad="12px 0 0 5px">
            <Stack $gap={7}>
              <Row>
                <Combo $w={153}>
                  <select aria-label="字体"><option>宋体</option></select>
                  <Down />
                </Combo>
                <Combo $w={47}>
                  <select aria-label="字号"><option>22</option></select>
                  <Down />
                </Combo>
                <ToolButton $w={26} $gap={0} aria-label="增大字号">
                  <Glyph $size={17}>A</Glyph>
                  <svg width="5" height="14" viewBox="0 0 5 14"><path d="M0 3h5L2.500 0z" fill="#2f5ba8" /></svg>
                </ToolButton>
                <ToolButton $gap={0} aria-label="减小字号">
                  <Glyph $size={13}>A</Glyph>
                  <svg width="5" height="14" viewBox="0 0 5 14"><path d="M0 0h5L2.500 3z" fill="#2f5ba8" /></svg>
                </ToolButton>
              </Row>
              <Row>
                <ToolButton><Glyph>B</Glyph></ToolButton>
                <ToolButton><Glyph $style="italic bold">I</Glyph></ToolButton>
                <ToolButton $w={34} $gap={7}><Underlined>U</Underlined><Down /></ToolButton>
                <Divider />
                <MenuAnchor>
                  <ToolButton $w={35} $on aria-label="边框" aria-haspopup="menu"><EdgeIcon b={1} /><Down /></ToolButton>
                  <Menu role="menu">
                    <MenuHeading>边框</MenuHeading>
                    <Entries list={BORDER_ENTRIES} />
                    <MenuHeading>绘制边框</MenuHeading>
                    <Entries list={DRAW_ENTRIES} />
                  </Menu>
                </MenuAnchor>
                <Divider />
                <ToolButton $w={34} aria-label="填充颜色"><FillIcon /><Down /></ToolButton>
                <ToolButton $w={34} aria-label="字体颜色"><ColorGlyph $size={18}>A</ColorGlyph><Down /></ToolButton>
                <Divider />
                <ToolButton $w={34} aria-label="拼音"><Pinyin>wén<span>文</span></Pinyin><Down /></ToolButton>
              </Row>
            </Stack>
          </GroupBody>
          <GroupLabel />
        </Group>

        <Group $w={237}>
          <GroupBody $pad="12px 0 0 6px">
            <Stack $gap={7}>
              <Row>
                <ToolButton aria-label="顶端对齐"><LinesIcon lines={full([3, 6, 9])} /></ToolButton>
                <ToolButton $w={24} $on aria-label="垂直居中"><LinesIcon lines={full([6, 9, 12])} /></ToolButton>
                <ToolButton aria-label="底端对齐"><LinesIcon lines={full([9, 12, 15])} /></ToolButton>
                <Divider />
                <ToolButton $w={34} aria-label="方向"><OrientIcon /><Down /></ToolButton>
              </Row>
              <Row>
                <ToolButton aria-label="左对齐"><LinesIcon lines={para("left")} /></ToolButton>
                <ToolButton $w={24} $on aria-label="居中"><LinesIcon lines={para("center")} /></ToolButton>
                <ToolButton aria-label="右对齐"><LinesIcon lines={para("right")} /></ToolButton>
                <Divider />
                <ToolButton aria-label="减少缩进量"><IndentIcon /></ToolButton>
                <ToolButton aria-label="增加缩进量"><IndentIcon right /></ToolButton>
              </Row>
            </Stack>
            <Divider $tall />
            <Stack $gap={7}>
              <SmallButton $h={26}><WrapIcon /><span>自动换行</span></SmallButton>
              <SmallButton $h={26}><MergeIcon /><span>合并后居中</span><Down /></SmallButton>
            </Stack>
          </GroupBody>
          <GroupLabel><span>对齐方式</span><Launcher /></GroupLabel>
        </Group>

        <Group $w={223}>
          <GroupBody $pad="0 0 0 8px">
            <Stack>
              <SmallButton $h={26}><Sigma>Σ</Sigma><span>自动求和</span><Down /></SmallButton>
              <SmallButton $h={18}><FillDownIcon /><span>填充</span><Down /></SmallButton>
              <SmallButton $h={26}><EraserIcon /><span>清除</span><Down /></SmallButton>
            </Stack>
            <BigButton $w={70}>
              <BigIcon><SortIcon /></BigIcon>
              <BigLine>排序和筛选</BigLine>
              <BigLine><Down /></BigLine>
            </BigButton>
            <BigButton $w={62}>
              <BigIcon><FindIcon /></BigIcon>
              <BigLine>查找和选择</BigLine>
              <BigLine><Down /></BigLine>
            </BigButton>
          </GroupBody>
          <GroupLabel><span>编辑</span></GroupLabel>
        </Group>

        <Group $w={464}>
          <GroupBody $pad="0 0 0 2px">
            <BigButton $w={58}>
              <BigIcon><CondIcon /></BigIcon>
              <BigLine>条件格式</BigLine>
              <BigLine><Down /></BigLine>
            </BigButton>
            <BigButton $w={58}>
              <BigIcon><TableStyleIcon /></BigIcon>
              <BigLine>套用</BigLine>
              <BigLine>表格格式<Down /></BigLine>
            </BigButton>
            <Gallery>
              <StyleCell $bg="#fff" $fg="#000" $kind="on">常规</StyleCell>
              <StyleCell $bg="#ffc7ce" $fg="#9c0006">差</StyleCell>
              <StyleCell $bg="#c6efce" $fg="#006100">好</StyleCell>
              <span />
              <StyleCell $bg="#ffeb9c" $fg="#9c6500">适中</StyleCell>
              <StyleCell $bg="#f2f2f2" $fg="#fa7d00" $kind="box">计算</StyleCell>
              <StyleCell $bg="#a5a5a5" $fg="#fff" $kind="dark">检查单元格</StyleCell>
            </Gallery>
          </GroupBody>
          <GroupLabel><span>样式</span></GroupLabel>
        </Group>
      </Ribbon>

      <FormulaBar>
        <NameBox>
          <input aria-label="名称框" defaultValue="A1" />
          <Down c="#333" w={7} />
        </NameBox>
        <FunctionArea />
        <FormulaInput aria-label="编辑栏" />
      </FormulaBar>

      <Sheet>
        <Grid>
          <colgroup>
            <col width={34} />
            {COLS.map(([, w], i) => <col key={i} width={w} />)}
          </colgroup>
          <thead>
            <tr>
              <Corner>
                <svg width="9" height="9" viewBox="0 0 9 9"><path d="M9 0v9H0z" fill="#b4b9c0" /></svg>
              </Corner>
              {COLS.map(([c], i) => <ColHead key={i} $sel={i < 2}>{c}</ColHead>)}
            </tr>
          </thead>
          <tbody>
            {ROWS.map((row, r) => (
              <BodyRow key={r} $short={r >= 13}>
                <RowHead $sel={r < 13}>{r + 1}</RowHead>
                {COLS.map((_, c) => (
                  <Cell key={c} $sel={r < 13 && c < 2} $head={r === 0 && c === 0} $num={c === 4 && r > 0 && r < 4}>
                    {row[c]}
                  </Cell>
                ))}
              </BodyRow>
            ))}
          </tbody>
        </Grid>
        <SelectionFrame />
      </Sheet>

      <Annotations width="900" height="700" viewBox="0 0 900 700" fill="none">
        <g stroke="#fb3a3a">
          <ellipse cx="231" cy="111" rx="5" ry="18" strokeWidth="2.500" />
          <ellipse cx="264.500" cy="289.500" rx="80" ry="15" strokeWidth="2.500" />
        </g>
        <g fill="#fb3a3a">
          <path d="M247 122L265 116V120L862 252L263 129L262 133Z" />
          <path d="M335 299L353 300L351 304L864 630L346 310L344 313Z" />
        </g>
      </Annotations>
    </Window>
  );
}
